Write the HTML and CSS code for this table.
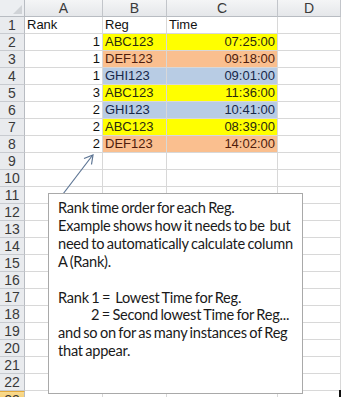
FILE: index.html
```html
<!DOCTYPE html>
<html>
<head>
<meta charset="utf-8">
<link rel="stylesheet" href="styles.css">
</head>
<body>
<div class="sheet">
  <div class="grid">
    <div class="corner"><span class="tri"></span></div>
    <div class="ch">A</div><div class="ch">B</div><div class="ch">C</div><div class="ch">D</div><div class="ch"></div>

    <div class="rh">1</div><div class="c">Rank</div><div class="c">Reg</div><div class="c">Time</div><div class="c"></div><div class="c"></div>
    <div class="rh">2</div><div class="c r">1</div><div class="c y">ABC123</div><div class="c r y">07:25:00</div><div class="c"></div><div class="c"></div>
    <div class="rh">3</div><div class="c r">1</div><div class="c o">DEF123</div><div class="c r o">09:18:00</div><div class="c"></div><div class="c"></div>
    <div class="rh">4</div><div class="c r">1</div><div class="c b">GHI123</div><div class="c r b">09:01:00</div><div class="c"></div><div class="c"></div>
    <div class="rh">5</div><div class="c r">3</div><div class="c y">ABC123</div><div class="c r y">11:36:00</div><div class="c"></div><div class="c"></div>
    <div class="rh">6</div><div class="c r">2</div><div class="c b">GHI123</div><div class="c r b">10:41:00</div><div class="c"></div><div class="c"></div>
    <div class="rh">7</div><div class="c r">2</div><div class="c y">ABC123</div><div class="c r y">08:39:00</div><div class="c"></div><div class="c"></div>
    <div class="rh">8</div><div class="c r">2</div><div class="c o">DEF123</div><div class="c r o">14:02:00</div><div class="c"></div><div class="c"></div>
    <div class="rh">9</div><div class="c"></div><div class="c"></div><div class="c"></div><div class="c"></div><div class="c"></div>
    <div class="rh">10</div><div class="c"></div><div class="c"></div><div class="c"></div><div class="c"></div><div class="c"></div>
    <div class="rh">11</div><div class="c"></div><div class="c"></div><div class="c"></div><div class="c"></div><div class="c"></div>
    <div class="rh">12</div><div class="c"></div><div class="c"></div><div class="c"></div><div class="c"></div><div class="c"></div>
    <div class="rh">13</div><div class="c"></div><div class="c"></div><div class="c"></div><div class="c"></div><div class="c"></div>
    <div class="rh">14</div><div class="c"></div><div class="c"></div><div class="c"></div><div class="c"></div><div class="c"></div>
    <div class="rh">15</div><div class="c"></div><div class="c"></div><div class="c"></div><div class="c"></div><div class="c"></div>
    <div class="rh">16</div><div class="c"></div><div class="c"></div><div class="c"></div><div class="c"></div><div class="c"></div>
    <div class="rh">17</div><div class="c"></div><div class="c"></div><div class="c"></div><div class="c"></div><div class="c"></div>
    <div class="rh">18</div><div class="c"></div><div class="c"></div><div class="c"></div><div class="c"></div><div class="c"></div>
    <div class="rh">19</div><div class="c"></div><div class="c"></div><div class="c"></div><div class="c"></div><div class="c"></div>
    <div class="rh">20</div><div class="c"></div><div class="c"></div><div class="c"></div><div class="c"></div><div class="c"></div>
    <div class="rh">21</div><div class="c"></div><div class="c"></div><div class="c"></div><div class="c"></div><div class="c"></div>
    <div class="rh">22</div><div class="c"></div><div class="c"></div><div class="c"></div><div class="c"></div><div class="c"></div>
    <div class="rh sel">23</div><div class="c"></div><div class="c"></div><div class="c"></div><div class="c"></div><div class="c"></div>
  </div>

  <svg class="arrow" width="60" height="60" viewBox="0 0 60 60">
    <line x1="15" y1="50" x2="44" y2="12" stroke="#5d7594" stroke-width="1.2"/>
    <polyline points="36,14.5 45,11 43.5,20.5" fill="none" stroke="#5d7594" stroke-width="1.2"/>
  </svg>

  <div class="note">
    <p>Rank time order for each Reg.</p>
    <p>Example shows how it needs to be&nbsp; but</p>
    <p>need to automatically calculate column</p>
    <p>A (Rank).</p>
    <p>&nbsp;</p>
    <p>Rank 1 =&nbsp; Lowest Time for Reg.</p>
    <p class="ind">2 = Second lowest Time for Reg...</p>
    <p>and so on for as many instances of Reg</p>
    <p>that appear.</p>
  </div>

  <div class="cursor"></div>
</div>
</body>
</html>
```

FILE: styles.css
```css
html, body {
  margin: 0;
  padding: 0;
  background: #ffffff;
  overflow: hidden;
}

.sheet {
  position: relative;
  width: 341px;
  height: 397px;
  overflow: hidden;
}

.grid {
  display: grid;
  grid-template-columns: 25px 78px 64px 111px 63px 40px;
  grid-auto-rows: 17px;
  font-family: "Liberation Sans", Arial, sans-serif;
  font-size: 13px;
  color: #111;
}

.grid > div {
  box-sizing: border-box;
  line-height: 16px;
  white-space: nowrap;
  overflow: hidden;
}

.corner {
  position: relative;
  background: #eceef1;
  border-right: 1px solid #b8bcc2;
  border-bottom: 1px solid #b8bcc2;
}

.tri {
  position: absolute;
  right: 2px;
  bottom: 2px;
  width: 0;
  height: 0;
  border-left: 9px solid transparent;
  border-bottom: 9px solid #d0d3d7;
}

.ch {
  background: linear-gradient(#f4f5f6, #e5e7ea);
  border-right: 1px solid #c2c5ca;
  border-bottom: 1px solid #b8bcc2;
  text-align: center;
  color: #3a3a3a;
  font-size: 14px;
}

.rh {
  background: #e9ebee;
  border-right: 1px solid #b8bcc2;
  border-bottom: 1px solid #c8cbd0;
  text-align: center;
  color: #3a3a3a;
  font-size: 14px;
}

.rh.sel {
  background: linear-gradient(#f9da8e, #f3c35a);
  border-top: 1px solid #e4a93a;
}

.c {
  border-right: 1px solid #d8d8d8;
  border-bottom: 1px solid #d8d8d8;
  padding: 0 2px;
}

.r {
  text-align: right;
}

.y {
  background: #ffff00;
  color: #2a2a10;
}

.o {
  background: #fabf8f;
  color: #4e1c0c;
}

.b {
  background: #b8cce4;
  color: #17284a;
}

.arrow {
  position: absolute;
  left: 48px;
  top: 144px;
}

.note {
  position: absolute;
  left: 48px;
  top: 193px;
  width: 255px;
  height: 201px;
  box-sizing: border-box;
  background: #ffffff;
  border: 1px solid #a9a9a9;
  padding: 5px 4px 0 9px;
  font-family: Lato, "Open Sans", sans-serif;
  font-size: 14.6px;
  letter-spacing: -0.25px;
  word-spacing: -1px;
  line-height: 17.9px;
  color: #1a1a1a;
}

.note p {
  margin: 0;
  white-space: nowrap;
}

.note .ind {
  padding-left: 33px;
}

.cursor {
  position: absolute;
  left: 339px;
  top: 390px;
  width: 2px;
  height: 7px;
  background: #111;
}
```
